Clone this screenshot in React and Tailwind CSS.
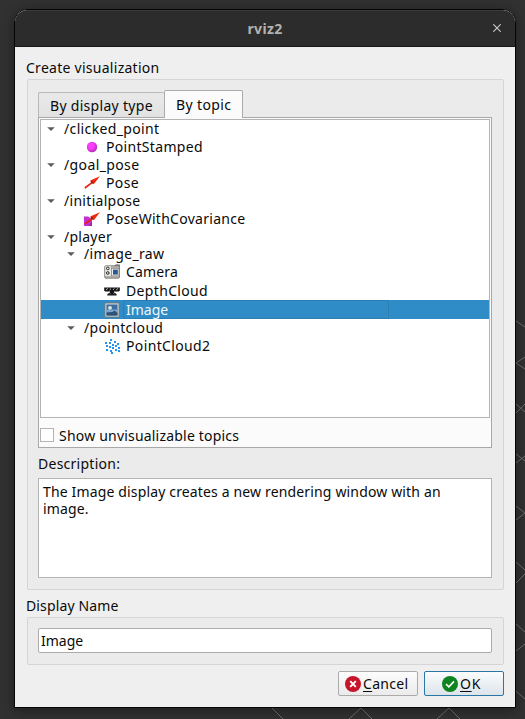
const PointIcon = () => (
  <svg viewBox="0 0 16 16" className="size-4">
    <defs>
      <radialGradient id="ball" cx="40%" cy="38%" r="65%">
        <stop offset="0.4" stopColor="#fb3cfb" />
        <stop offset="1" stopColor="#b52cb8" />
      </radialGradient>
    </defs>
    <circle cx="8" cy="8" r="5.2" fill="url(#ball)" />
  </svg>
);

const Arrow = () => (
  <>
    <path d="M0.8 13 L9.4 6.6" stroke="#e8250f" strokeWidth="1.7" />
    <path d="M6.2 5.6 L15.9 1.2 L9.8 9.2 L8.4 7.6 Z" fill="#f5260c" />
    <path d="M6.8 5.8 L8.6 6.6 L9.6 8.8 L8.2 8.6 L6.6 7 Z" fill="#8e1a0c" />
  </>
);

const PoseIcon = () => (
  <svg viewBox="0 0 16 16" className="size-4"><Arrow /></svg>
);

const CovarianceIcon = () => (
  <svg viewBox="0 0 16 16" className="size-4">
    <path d="M0 5.5 H4 L8 8 V15 H0 Z" fill="#c32fd0" />
    <path d="M4.5 15 L8 10.5 V15 Z" fill="#9f28aa" />
    <Arrow />
  </svg>
);

const CameraIcon = () => (
  <svg viewBox="0 0 16 16" className="size-4">
    <path d="M10.5 2.5 L11.5 0.8 H15.5 V3 Z" fill="#77756f" stroke="#4c4c4a" strokeWidth="0.5" />
    <rect x="0.7" y="1.8" width="14.8" height="12.4" rx="1" fill="#b4b3ae" stroke="#74726c" strokeWidth="0.8" />
    <rect x="1.2" y="2.3" width="5.8" height="9.6" fill="#e6e5e0" />
    <circle cx="3.8" cy="4.4" r="1.3" fill="#fff" stroke="#202020" strokeWidth="1" />
    <circle cx="3.8" cy="9" r="1.3" fill="#fff" stroke="#202020" strokeWidth="1" />
    <rect x="7.6" y="4.3" width="7.3" height="7.6" fill="#f0f0ec" stroke="#777" strokeWidth="0.6" />
    <rect x="9" y="5.6" width="4.8" height="5" fill="#2a5596" />
  </svg>
);

const DepthIcon = () => (
  <svg viewBox="0 0 16 16" className="size-4">
    <path d="M0.2 4.4 H15.8 V7.4 L14.8 8.4 H1.2 L0.2 7.4 Z" fill="#161616" />
    <path d="M6 8 H10 V9.6 L12.6 11 V12.6 H3.4 V11 L6 9.6 Z" fill="#161616" />
    <path d="M2 6.8 L3.8 5.4 M5.6 6.8 L7 5.6 M9 6.8 L10.4 5.6 M12.2 6.8 L14 5.4" stroke="#e8e8e8" strokeWidth="0.8" />
    <path d="M5.4 11.2 L7 10.4 M9 10.4 L10.6 11.2" stroke="#888" strokeWidth="0.6" />
  </svg>
);

const ImageIcon = () => (
  <svg viewBox="0 0 16 16" className="size-4">
    <rect x="0.9" y="0.9" width="14.2" height="14.2" rx="0.8" fill="#d2d6d4" stroke="#6d7476" strokeWidth="0.9" />
    <rect x="2.5" y="2.5" width="11" height="11" fill="#3c6ea5" />
    <path d="M2.5 7.6 H13.5 V10.6 H2.5 Z" fill="#7ba6cc" />
    <path d="M2.5 10.4 L8.5 10 L10.5 8.4 L13.5 11 V13.5 H2.5 Z" fill="#2d5478" />
    <circle cx="6" cy="5.8" r="1.9" fill="#dfe9dc" />
  </svg>
);

const CLOUD = [[6, 1], [10, 3], [1, 4], [5, 4], [13, 5], [8, 6], [2, 7], [11, 7], [5, 8], [8, 9], [14, 9], [2, 11], [11, 11], [6, 12], [14, 12], [7, 14]];
const CloudIcon = () => (
  <svg viewBox="0 0 16 16" className="size-4" shapeRendering="crispEdges">
    {CLOUD.map(([x, y]) => (
      <rect key={`${x}-${y}`} x={x} y={y} width="2" height="1.6" fill="#2492f2" />
    ))}
  </svg>
);

const ROWS = [
  { text: "/clicked_point", depth: 0, track: "tracking-[0.36px]", h: "h-[18px]" },
  { text: "PointStamped", depth: 1, icon: PointIcon, track: "tracking-[0.32px]", h: "h-[18px]" },
  { text: "/goal_pose", depth: 0, track: "tracking-[0.38px]", h: "h-[18px]" },
  { text: "Pose", depth: 1, icon: PoseIcon, track: "tracking-[0.37px]", h: "h-[18px]" },
  { text: "/initialpose", depth: 0, track: "tracking-[0.3px]", h: "h-[18px]" },
  { text: "PoseWithCovariance", depth: 1, icon: CovarianceIcon, track: "tracking-[0.28px]", h: "h-[18px]" },
  { text: "/player", depth: 0, track: "tracking-[0.27px]", h: "h-[17px]" },
  { text: "/image_raw", depth: 1, track: "tracking-[0.36px]", h: "h-[17px]" },
  { text: "Camera", depth: 2, icon: CameraIcon, track: "tracking-[0.17px]", h: "h-[19px]" },
  { text: "DepthCloud", depth: 2, icon: DepthIcon, track: "tracking-[0.34px]", h: "h-[19px]" },
  { text: "Image", depth: 2, icon: ImageIcon, track: "tracking-[0px]", h: "h-[19px]", selected: true },
  { text: "/pointcloud", depth: 1, track: "tracking-[0.33px]", h: "h-[18px]" },
  { text: "PointCloud2", depth: 2, icon: CloudIcon, track: "tracking-[0.36px]", h: "h-[18px]" },
];

const INDENT = ["pl-[2px]", "pl-[22px]", "pl-[42px]"];
const ICON_INDENT = ["pl-[23px]", "pl-[43px]", "pl-[63px]"];

function TreeRow({ row }) {
  const Icon = row.icon;
  return (
    <div
      className={`flex items-center ${row.h} ${Icon ? ICON_INDENT[row.depth] : INDENT[row.depth]} ${
        row.selected ? "bg-[#308cc6] text-[#eff6fb]" : ""
      }`}
    >
      {Icon ? (
        <Icon />
      ) : (
        <svg viewBox="0 0 8 4" className="ml-1 mr-2 h-1 w-2">
          <path d="M0.2 0.2 H7.8 L4 3.9 Z" fill="#5c5c5c" />
        </svg>
      )}
      <span
        className={`flex items-center whitespace-pre ${row.h} ${row.track} ${
          row.selected ? "ml-[3px] w-[266px] border border-[#2b7eb2] pl-[2px]" : Icon ? "ml-[6px]" : "ml-px"
        }`}
      >
        {row.text}
      </span>
    </div>
  );
}

function Backdrop() {
  return (
    <svg viewBox="0 0 525 719" className="absolute inset-0 h-[719px] w-[525px]" fill="none" stroke="#6e6e6e" strokeWidth="1">
      <path d="M516 321 L525 327 M525 357 L516 363 L525 369 M516 404 L525 412 M516 413 L525 404 M516 454 L525 461 M516 463 L525 456 M516 506 L525 513 L516 520 M516 562 L525 570 M516 583 L525 574 M516 624 L525 632 M516 651 L525 644 M516 691 L525 699" />
      <path d="M272 708 L283 719 M349 719 L361 708 L372 719 M437 719 L449 708 L460 719" />
    </svg>
  );
}

export default function App() {
  return (
    <div className="relative h-[719px] w-[525px] overflow-hidden bg-[#313131] pl-[14px] pt-[9px] font-['Noto_Sans','Open_Sans',sans-serif] text-[14px] leading-[18px] text-[#0a0a0a]">
      <Backdrop />
      <div className="relative flex h-[699px] w-[502px] flex-col overflow-hidden rounded-t-[13px] border border-[#050505] bg-[#efefef] shadow-[0_2px_12px_rgba(0,0,0,0.4)]">
        <header className="relative flex h-[37px] shrink-0 items-center justify-center rounded-t-[12px] border-b border-t border-b-[#181818] border-t-[#3c3c3c] bg-[#2c2c2c]">
          <h1 className="text-[14px] font-bold tracking-[0.35px] text-[#b4b2ae]">rviz2</h1>
          <svg viewBox="0 0 8 8" className="absolute right-[14px] top-[13px] size-2" stroke="#c4c4c4" strokeWidth="1.2">
            <path d="M0.3 0.3 L7.7 7.7 M7.7 0.3 L0.3 7.7" />
          </svg>
        </header>

        <main className="flex flex-col px-[11px] pt-[12px]">
          <h2 className="h-[20px] tracking-[0.27px]">Create visualization</h2>
          <section className="ml-px flex h-[511px] w-[477px] flex-col rounded-[2px] border border-[#d5d5d5] bg-[#ebebeb] px-[10px] pt-[10px]">
            <div className="flex h-[27px] items-end">
              <button className="h-[25px] w-[126px] rounded-t-[2px] border border-r-0 border-b-0 border-[#b9b9b9] bg-gradient-to-b from-[#e9e9e9] to-[#e2e2e2] pl-[11px] pt-px text-left leading-[24px] tracking-[0.3px]">
                By display type
              </button>
              <button className="relative -mb-px h-[28px] w-[79px] self-start rounded-t-[2px] border border-b-0 border-[#ababab] bg-[#fbfbfb] pl-[11px] text-left leading-[28px] tracking-[0.39px]">
                By topic
              </button>
            </div>
            <div className="flex h-[331px] w-[454px] shrink-0 flex-col border border-[#a8a8a8] bg-[#fbfbfb] px-px pt-px">
              <div className="flex h-[299px] w-[450px] shrink-0 flex-col border border-[#b4b4b4] bg-white">
                {ROWS.map((row) => (
                  <TreeRow key={row.text} row={row} />
                ))}
              </div>
              <label className="mt-[10px] flex h-[14px] items-center">
                <span className="size-[14px] border border-[#b4b4b4] bg-white" />
                <span className="ml-[5px] mt-px tracking-[0.2px]">Show unvisualizable topics</span>
              </label>
            </div>
            <p className="mt-[7px] h-[23px] shrink-0 tracking-[0.26px]">Description:</p>
            <div className="h-[100px] w-[454px] shrink-0 border border-[#b4b4b4] bg-white px-1 pt-[4px]">
              <p className="w-[420px] leading-[17px] tracking-[0.15px]">
                The Image display creates a new rendering window with an image.
              </p>
            </div>
          </section>

          <h2 className="mt-[7px] h-[20px] tracking-[0.13px]">Display Name</h2>
          <section className="ml-px h-[48px] w-[477px] rounded-[2px] border border-[#d5d5d5] bg-[#ebebeb] px-[10px] pt-[10px]">
            <div className="flex h-[25px] w-[454px] items-center rounded-[2px] border border-[#acacac] bg-white pl-[2px]">Image</div>
          </section>

          <footer className="mt-[6px] flex h-[25px] justify-end gap-[6px]">
            <button className="flex h-[25px] w-[80px] items-center rounded-[2px] border border-[#ababab] bg-gradient-to-b from-[#fdfdfd] to-[#ebebeb] pl-[6px]">
              <svg viewBox="0 0 16 16" className="size-4">
                <circle cx="8" cy="8" r="8" fill="#c7162b" />
                <path d="M5.2 5.2 L10.8 10.8 M10.8 5.2 L5.2 10.8" stroke="#fff" strokeWidth="1.9" />
              </svg>
              <span className="ml-[2px] mt-px tracking-[0.3px]">
                <span className="underline decoration-1 underline-offset-2">C</span>ancel
              </span>
            </button>
            <button className="flex h-[25px] w-[80px] items-center rounded-[2px] border border-[#2a76a5] bg-gradient-to-b from-[#fbfcfd] to-[#dce4ea] pl-[17px]">
              <svg viewBox="0 0 16 16" className="size-4">
                <circle cx="8" cy="8" r="8" fill="#0e8420" />
                <path d="M4 8.2 L6.9 10.8 L12 5.4" fill="none" stroke="#fff" strokeWidth="1.6" />
              </svg>
              <span className="ml-[2px] mt-px tracking-[0.7px]">
                <span className="underline decoration-1 underline-offset-2">O</span>K
              </span>
            </button>
          </footer>
        </main>
      </div>
    </div>
  );
}
